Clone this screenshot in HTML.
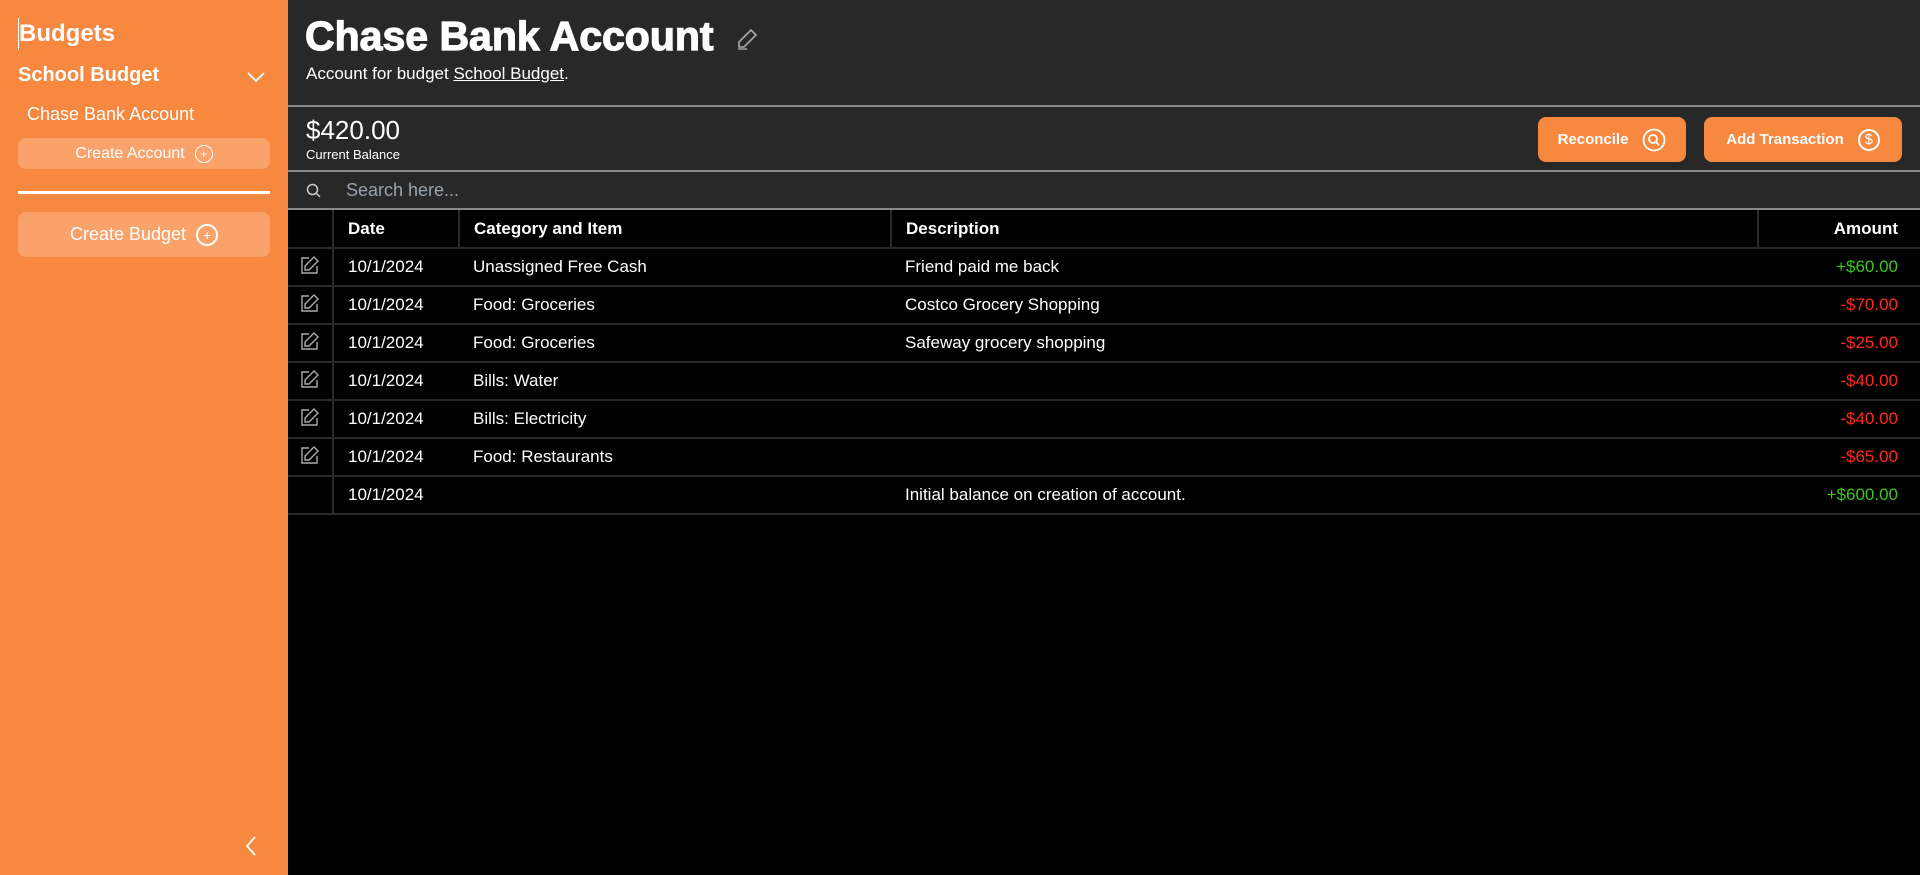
<!DOCTYPE html>
<html><head><style>
*{box-sizing:border-box;margin:0;padding:0}
body{width:1920px;height:875px;overflow:hidden;background:#000;font-family:"Liberation Sans",sans-serif;color:#fff;position:relative}
.side{position:absolute;left:0;top:0;width:288px;height:875px;background:#f68840}
.main{position:absolute;left:288px;top:0;right:0;height:875px;background:#000}
.hdr{height:107px;background:#282828;border-bottom:2px solid #8a8a8a;position:relative}
.bal{height:65px;background:#282828;border-bottom:2px solid #8a8a8a;position:relative}
.srch{height:38px;background:#282828;border-bottom:2px solid #8a8a8a;position:relative}
.btn{position:absolute;top:10px;height:45px;background:#f68840;border-radius:8px;font-weight:bold;font-size:15px;display:flex;align-items:center;justify-content:center;gap:14px}
.circ{width:22px;height:22px;border:2px solid #fff;border-radius:50%;display:flex;align-items:center;justify-content:center;font-size:14px;font-weight:normal}
table{border-collapse:collapse;width:1632px;font-size:17px}
td,th{height:38px;border-bottom:2px solid #2a2a2a;padding:0 14px;text-align:left;white-space:nowrap}
th{border-right:2px solid #2a2a2a;font-weight:bold}
td:first-child{border-right:2px solid #2a2a2a;padding:0 12px}
.r{text-align:right;padding-right:22px}
.g{color:#3ec41d}.red{color:#ff2a1a}
.sbtn{position:absolute;left:18px;width:252px;background:#f9a26a;border-radius:8px;display:flex;align-items:center;justify-content:center;gap:10px}
</style></head><body>
<div class="side">
<div style="position:absolute;left:18px;top:18px;font-size:24px;font-weight:bold;border-left:1px solid #fff;height:32px;line-height:32px">Budgets</div>
<div style="position:absolute;left:18px;top:64px;font-size:20px;font-weight:bold">School Budget</div>
<svg style="position:absolute;left:246px;top:70px" width="20" height="14"><path d="M2 3l8 8 8-8" stroke="#fff" stroke-width="1.8" fill="none"/></svg>
<div style="position:absolute;left:27px;top:104px;font-size:18px">Chase Bank Account</div>
<div class="sbtn" style="top:138px;height:31px;font-size:16px">Create Account <span class="circ" style="width:18px;height:18px;border-width:1.5px;font-size:13px">+</span></div>
<div style="position:absolute;left:18px;top:191px;width:252px;height:3px;background:#fff"></div>
<div class="sbtn" style="top:212px;height:45px;font-size:18px">Create Budget <span class="circ">+</span></div>
<svg style="position:absolute;left:244px;top:835px" width="14" height="22"><path d="M11 2L3 11l8 9" stroke="#fff" stroke-width="1.8" fill="none"/></svg>
</div>
<div class="main">
<div class="hdr">
<div style="position:absolute;left:17px;top:13px;font-size:41px;font-weight:900;-webkit-text-stroke:1.2px #fff">Chase Bank Account</div>
<svg style="position:absolute;left:447px;top:27px" width="24" height="24" viewBox="0 0 24 24"><path d="M16 3l5 5L9 20H4v-5z" stroke="#aaa" stroke-width="1.6" fill="none"/><path d="M3 22h9" stroke="#aaa" stroke-width="1.4" fill="none"/></svg>
<div style="position:absolute;left:18px;top:64px;font-size:17px">Account for budget <u>School Budget</u>.</div>
</div>
<div class="bal">
<div style="position:absolute;left:18px;top:8px;font-size:26px">$420.00</div>
<div style="position:absolute;left:18px;top:40px;font-size:13px">Current Balance</div>
<div class="btn" style="left:1250px;width:148px">Reconcile <svg width="24" height="24" viewBox="0 0 24 24"><circle cx="12" cy="12" r="10.5" stroke="#fff" stroke-width="1.8" fill="none"/><circle cx="11" cy="11" r="4" stroke="#fff" stroke-width="1.8" fill="none"/><path d="M14 14l3 3" stroke="#fff" stroke-width="1.8"/></svg></div>
<div class="btn" style="left:1416px;width:198px">Add Transaction <span class="circ" style="font-size:15px">$</span></div>
</div>
<div class="srch">
<svg style="position:absolute;left:18px;top:11px" width="16" height="16"><circle cx="6.5" cy="6.5" r="5" stroke="#ccc" stroke-width="1.5" fill="none"/><path d="M10 10l4 4" stroke="#ccc" stroke-width="1.5"/></svg>
<div style="position:absolute;left:58px;top:8px;font-size:18px;color:#9aa3ad">Search here...</div>
</div>
<table>
<tr><th style="width:45px"></th><th style="width:126px">Date</th><th style="width:432px">Category and Item</th><th style="width:867px">Description</th><th class="r" style="border-right:none">Amount</th></tr>
<tr><td><svg width="20" height="20" viewBox="0 0 20 20"><path d="M14 2l4 4-9 9H5v-4z M9 3H2v15h15v-7" stroke="#aaa" stroke-width="1.4" fill="none"/></svg></td><td>10/1/2024</td><td>Unassigned Free Cash</td><td>Friend paid me back</td><td class="r g">+$60.00</td></tr>
<tr><td><svg width="20" height="20" viewBox="0 0 20 20"><path d="M14 2l4 4-9 9H5v-4z M9 3H2v15h15v-7" stroke="#aaa" stroke-width="1.4" fill="none"/></svg></td><td>10/1/2024</td><td>Food: Groceries</td><td>Costco Grocery Shopping</td><td class="r red">-$70.00</td></tr>
<tr><td><svg width="20" height="20" viewBox="0 0 20 20"><path d="M14 2l4 4-9 9H5v-4z M9 3H2v15h15v-7" stroke="#aaa" stroke-width="1.4" fill="none"/></svg></td><td>10/1/2024</td><td>Food: Groceries</td><td>Safeway grocery shopping</td><td class="r red">-$25.00</td></tr>
<tr><td><svg width="20" height="20" viewBox="0 0 20 20"><path d="M14 2l4 4-9 9H5v-4z M9 3H2v15h15v-7" stroke="#aaa" stroke-width="1.4" fill="none"/></svg></td><td>10/1/2024</td><td>Bills: Water</td><td></td><td class="r red">-$40.00</td></tr>
<tr><td><svg width="20" height="20" viewBox="0 0 20 20"><path d="M14 2l4 4-9 9H5v-4z M9 3H2v15h15v-7" stroke="#aaa" stroke-width="1.4" fill="none"/></svg></td><td>10/1/2024</td><td>Bills: Electricity</td><td></td><td class="r red">-$40.00</td></tr>
<tr><td><svg width="20" height="20" viewBox="0 0 20 20"><path d="M14 2l4 4-9 9H5v-4z M9 3H2v15h15v-7" stroke="#aaa" stroke-width="1.4" fill="none"/></svg></td><td>10/1/2024</td><td>Food: Restaurants</td><td></td><td class="r red">-$65.00</td></tr>
<tr><td></td><td>10/1/2024</td><td></td><td>Initial balance on creation of account.</td><td class="r g">+$600.00</td></tr>
</table>
</div>
</body></html>
